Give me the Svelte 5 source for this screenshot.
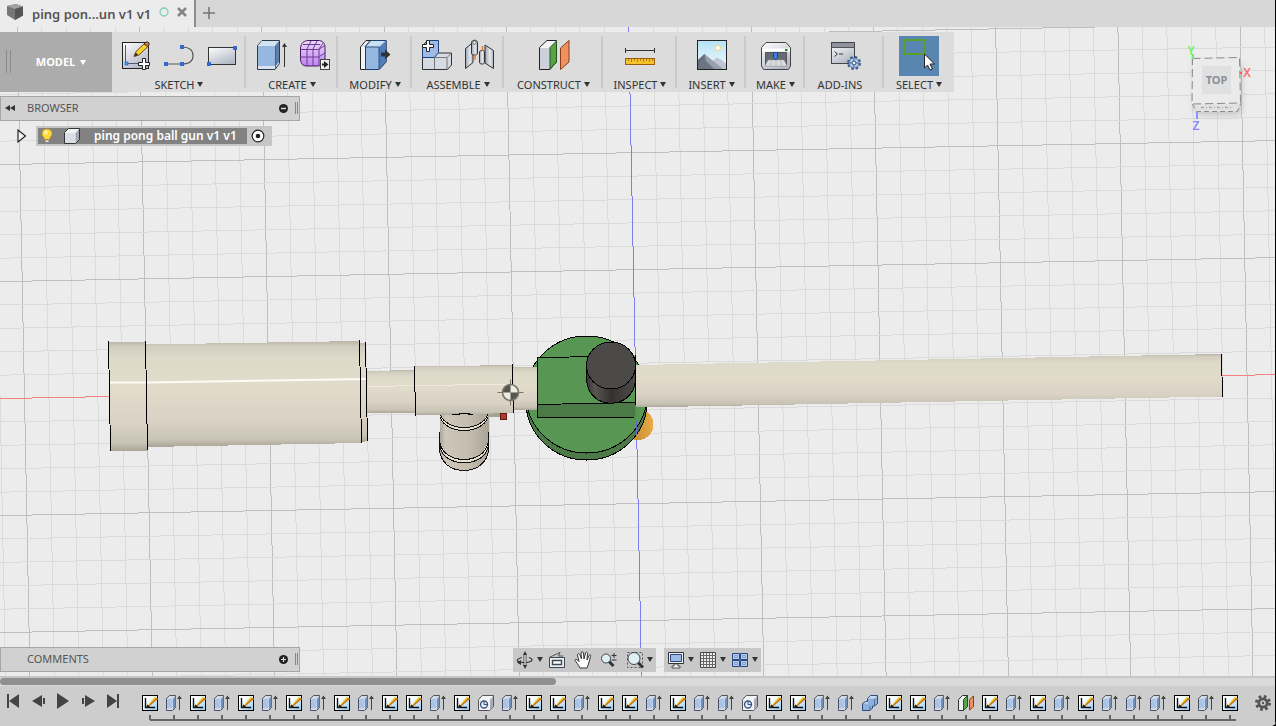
<script>
  const groups = [
    { label: 'SKETCH', icons: ['sketch', 'spline', 'rect'], menu: true },
    { label: 'CREATE', icons: ['box', 'form'], menu: true },
    { label: 'MODIFY', icons: ['presspull'], menu: true },
    { label: 'ASSEMBLE', icons: ['component', 'joint'], menu: true },
    { label: 'CONSTRUCT', icons: ['plane'], menu: true },
    { label: 'INSPECT', icons: ['measure'], menu: true },
    { label: 'INSERT', icons: ['decal'], menu: true },
    { label: 'MAKE', icons: ['print'], menu: true },
    { label: 'ADD-INS', icons: ['addins'], menu: false },
    { label: 'SELECT', icons: ['select'], menu: true }
  ];

  const playback = [
    { name: 'Go to beginning', d: 'M0 1h2v14H0zM12 1v14L2 8z' },
    { name: 'Step back', d: 'M10 2v12L0 8zM11 5h2v6h-2z' },
    { name: 'Play', d: 'M0 0v16l12-8z' },
    { name: 'Step forward', d: 'M0 5h2v6H0zM3 2v12l10-6z' },
    { name: 'Go to end', d: 'M0 1v14l10-7zM10 1h2v14h-2z' }
  ];

  const names = { S: 'Sketch', E: 'Extrude', H: 'Hole', C: 'Combine', P: 'Plane' };
  const steps = [...'SESESESESESSESHESSESSESEEHSSEECSSEPSESESEEESES'];

  const across = Array.from({ length: 58 }, (_, i) => i - 4);
  const down = Array.from({ length: 31 }, (_, i) => i - 17);
</script>

{#snippet caret(hidden = false)}
  <svg class="caret" class:hidden width="6" height="5" viewBox="0 0 6 5" aria-hidden="true"><path d="M0 0h6L3 5z" fill="currentColor" /></svg>
{/snippet}

{#snippet toolIcon(name)}
  <svg width="32" height="32" viewBox="0 0 32 32" aria-hidden="true">
    {#if name === 'sketch'}
      <rect x="2.5" y="3.5" width="26" height="26" fill="url(#paper)" stroke="#222" />
      <path d="M5.500 6v18.500H20" fill="none" stroke="#555b66" />
      <rect x="5" y="23" width="3" height="3" fill="#3c9cf0" stroke="#1b62b8" stroke-width=".6" />
      <path d="M14 17.500l2-5L25 4l3.500 3L19 16z" fill="#fbd12c" stroke="#6b4a12" />
      <path d="M24 5l2-2h2l1.500 2-2 2.500z" fill="#b98257" stroke="#4d2d12" />
      <path d="M14 17.500l2-4 2 2.500z" fill="#3a2a10" />
      <path d="M22.500 19.500h3v4h4v3h-4v4h-3v-4h-4v-3h4z" fill="#fff" stroke="#222" />
    {:else if name === 'spline'}
      <path d="M3 25h16c6 0 11-2 11-8.500C30 10 24 8 19 8" fill="none" stroke="#555" stroke-width="1.200" />
      <path d="M1 23h4v4H1zM17 23h4v4h-4zM17 6h4v4h-4z" fill="#3567cf" />
    {:else if name === 'rect'}
      <rect x="2.500" y="8.500" width="27" height="17" fill="url(#paper)" stroke="#333" />
      <path d="M1 23h4v4H1zM27 7h4v4h-4z" fill="#3567cf" />
    {:else if name === 'box'}
      <path d="M2.500 6.500L7 1.500h17.500v23L20 30.500H2.500z" fill="#dce3ec" stroke="#2c3a50" />
      <path d="M3 7h17v20H3z" fill="#96b7df" />
      <path d="M3 6.500L7 2h17l-4 4.500z" fill="#d2e4f3" />
      <path d="M20.500 7L24 3v20l-3.500 4z" fill="#5d7fae" />
      <path d="M20.500 6.500L24 2.500M20.500 7v23" stroke="#2c3a50" stroke-width=".7" fill="none" />
      <path d="M29.500 28V6" stroke="#333" />
      <path d="M27 8l2.500-4L32 8z" fill="#333" />
    {:else if name === 'form'}
      <path d="M2.500 9C3 4 6 1.500 11 1.500h9c5 0 7 3 7 7V18c0 6-3 9-8 9H9c-5 0-6.500-3-6.500-8z" fill="url(#purple)" stroke="#41185e" />
      <path d="M2.500 10.500h18l6.500-4M2.500 18h18l6.500-4M5 5.500h17M9 27V10l4-8M15 27V10l4-8M21 27V10l4-6" stroke="#6d3a92" fill="none" />
      <rect x="22.500" y="20.500" width="9" height="10" fill="#eee" stroke="#444" />
      <path d="M26 22l4.500 3.500L26 29zM24 24.500h3v2h-3z" fill="#222" />
    {:else if name === 'presspull'}
      <path d="M1.500 30.500V8L7 1.500h20V23l-7 7.500z" fill="#f3f4f6" stroke="#222" />
      <path d="M6.500 30.500V8L12 1.500h15V23l-7 7.500z" fill="#96b7df" stroke="#1f3f74" />
      <path d="M7 7.500L12 2h14l-6 5.500z" fill="#c9e0f2" />
      <path d="M20 8.500l6.500-6V23L20 29.500z" fill="#4f7fba" />
      <path d="M6.500 8H20v22M10.500 2l-5 6" stroke="#1f3f74" fill="none" stroke-width=".8" />
      <path d="M22 13.500h4v-3l5.500 5-5.500 5v-3h-4z" fill="#333" />
    {:else if name === 'component'}
      <path d="M1.500 30.500v-12h12v-3l4-1.500h13v12l-4 4.500z" fill="#d6dae2" stroke="#333" />
      <path d="M1.500 18.500v-12l5-5h11v12l-4 5z" fill="#9dbbe6" stroke="#1f3f74" />
      <path d="M13.500 30V18.500H26v12M26 18.500l4-4" stroke="#777" fill="none" />
      <path d="M5.500 1.500h3v4h4v3h-4v4h-3v-4h-4v-3h4z" fill="#fff" stroke="#222" />
    {:else if name === 'joint'}
      <path d="M1.500 29.500V9.500L9 3.500v20z" fill="url(#steel)" stroke="#333" />
      <path d="M7.500 3.500c0-3 6-3 6 0v11c0 2-6 2-6 0z" fill="url(#steel)" stroke="#333" />
      <circle cx="10.500" cy="3.500" r="1.600" fill="#fff" stroke="#333" stroke-width=".7" />
      <path d="M29.500 29.500v-18L21 6v18z" fill="url(#steel)" stroke="#333" />
      <path d="M15.500 13c0-2 5-2 5 0v10.500c0 2-5 2-5 0z" fill="url(#steel)" stroke="#333" />
      <path d="M11 16v4.500M18.500 7v5" stroke="#e87722" stroke-width="1.400" />
    {:else if name === 'plane'}
      <path d="M1.500 8.500L9 1.500h9.500V23L12 30.500H1.500z" fill="#f4f5f7" stroke="#222" />
      <path d="M2 9h10v21H2z" fill="#cdd1d9" />
      <path d="M12 8.500L18.500 2v21L12 30z" fill="#57a446" stroke="#24541c" />
      <path d="M22.500 30.500V9L31 1.500V23z" fill="#ee9160" stroke="#8c3b12" />
    {:else if name === 'measure'}
      <path d="M1.500 9v5M30.500 9v5M1 11.500h29" stroke="#333" fill="none" />
      <rect x="1.500" y="19.500" width="29" height="6" fill="#f6c22e" stroke="#9b5b0a" />
      <path d="M4.500 20v2M7.500 20v3M10.500 20v2M13.500 20v3M16.500 20v2M19.500 20v3M22.500 20v2M25.500 20v3M28.500 20v2" stroke="#b07a18" />
    {:else if name === 'decal'}
      <rect x="1.500" y="1.500" width="29" height="29" fill="url(#sky)" stroke="#222" />
      <circle cx="22" cy="9" r="2.500" fill="#fff" stroke="#ffd45c" />
      <path d="M2 21l6.500-6 4 4 3 8v3H2z" fill="#7d8492" />
      <path d="M16 22l5-3.500 4 2 5 4V30H16z" fill="#c0c6d1" />
      <path d="M8.500 15L27 30H2v-1z" fill="#979eac" />
      <path d="M8.500 15L10 22 18 30H2v-9z" fill="#5f6674" opacity=".75" />
    {:else if name === 'print'}
      <path d="M1.500 8.500L6 3.500h20l4.500 5V27l-2 3.500h-25L1.500 27z" fill="url(#paper)" stroke="#444" />
      <path d="M2 9.500h28v3H2z" fill="#fff" />
      <path d="M5.500 13.500h21V26h-21z" fill="#656b75" stroke="#555" />
      <path d="M8 21h16l3 6H5z" fill="#eef0f3" stroke="#888" stroke-width=".6" />
      <path d="M8 23h16M7 25h18M12 21l-2 6M16 21v6M20 21l2 6" stroke="#aaa" stroke-width=".6" />
      <path d="M13.500 13.500h4v5l-2 2.500-2-2.500z" fill="#3f80dc" stroke="#1b4796" />
      <path d="M25 10h2.500v2H25z" fill="#118a11" />
    {:else if name === 'addins'}
      <rect x="2.500" y="3.500" width="23" height="21" fill="url(#paper)" stroke="#444" />
      <path d="M3 4h22v4H3z" fill="#8e939c" />
      <path d="M2.500 8.500h23" stroke="#555" />
      <path d="M5.500 12.500l3 2.500-3 2.500M10 15h4" stroke="#333" fill="none" />
      <g transform="translate(25 24)">
        <circle r="5.500" fill="none" stroke="#3c5f8f" stroke-dasharray="2.400 1.920" stroke-width="3" />
        <circle r="5" fill="#b4cdeb" stroke="#3c5f8f" stroke-width=".8" />
        <circle r="2" fill="#eef4fb" stroke="#2d4b78" />
        <path d="M0-4v1.500M0 4V2.500M-4 0h1.500M4 0H2.500" stroke="#2d4b78" />
      </g>
    {:else if name === 'select'}
      <rect x="1" y="1" width="21" height="14" fill="none" stroke="#5aa50c" stroke-width="1.600" />
      <path d="M21.500 15v14l3-3 2.500 5 2.500-1-2.500-5h4.500z" fill="#fff" stroke="#222" />
    {/if}
  </svg>
{/snippet}

{#snippet stepIcon(kind)}
  <svg width="16" height="16" viewBox="0 0 16 16" aria-hidden="true">
    {#if kind === 'S'}
      <rect x=".5" y=".5" width="15" height="15" fill="url(#page)" stroke="#000" />
      <path d="M3.500 3v9.500H13" fill="none" stroke="#111" stroke-width="1.400" />
      <path d="M5 11.500L13 1.500 16 4l-9 7.500z" fill="#f9c81f" />
      <path d="M7 11.500l8.500-7.500-1.200-1L6 11z" fill="#b56a2c" />
      <path d="M4 13l1.200-3.500L8 11.500z" fill="#222" />
    {:else if kind === 'E'}
      <path d="M.5 3.500l3-3h6v12l-3 3h-6z" fill="#d3dae4" stroke="#4a5464" />
      <path d="M1 4h5.500v9H1z" fill="#a9c6ea" />
      <path d="M7 4l2.500-3v11L7 14z" fill="#6f8fb8" />
      <path d="M13.500 15V2" stroke="#444" />
      <path d="M11 4l2.500-3.500L16 4z" fill="#444" />
    {:else if kind === 'H'}
      <path d="M.5 4.500l4-4h11v11l-4 4H.5z" fill="#f1f2f4" stroke="#555" />
      <path d="M12 5l3-4v10.500L12 15z" fill="#a8acb4" />
      <circle cx="6" cy="9.500" r="3.500" fill="#e4edf8" stroke="#33507e" stroke-width="1.300" />
      <path d="M6 6v3.500h3.500" fill="none" stroke="#33507e" />
    {:else if kind === 'C'}
      <path d="M.5 8.500l3-2h2v-3l3-3h7v8l-3 2.500h-2v2l-2.500 2.500H.5z" fill="#8fb0dc" stroke="#2c4a7c" />
      <path d="M6 3.500l2.500-2.500H15l-2.500 2.500zM1 8.500L4 7h2v1.500z" fill="#c8dcf2" />
      <path d="M12.500 4v6.500M8 11v4" stroke="#4f719f" />
    {:else}
      <path d="M.5 4.500l4-4h5v11l-4 4h-5z" fill="#eff0f2" stroke="#333" />
      <path d="M5.500 4.500l4-4v11l-4 4z" fill="#57a446" stroke="#24541c" />
      <path d="M11.500 15V4.500l4-3.500v10.500z" fill="#ee9160" stroke="#8c3b12" />
    {/if}
  </svg>
{/snippet}

<div class="app">
  <svg class="defs" aria-hidden="true">
    <defs>
      <linearGradient id="paper" x1="0" y1="0" x2=".6" y2="1"><stop offset="0" stop-color="#fff" /><stop offset="1" stop-color="#b4b9c8" /></linearGradient>
      <linearGradient id="page" x1="0" y1="0" x2="1" y2="1"><stop offset=".3" stop-color="#fff" /><stop offset="1" stop-color="#8fc4f0" /></linearGradient>
      <linearGradient id="purple" x1="0" y1="0" x2="0" y2="1"><stop offset="0" stop-color="#eedcfb" /><stop offset="1" stop-color="#be82f2" /></linearGradient>
      <linearGradient id="steel"><stop offset="0" stop-color="#9da4b0" /><stop offset=".6" stop-color="#e6e9ee" /><stop offset="1" stop-color="#a9afba" /></linearGradient>
      <linearGradient id="sky" x1="0" y1="0" x2="0" y2="1"><stop offset="0" stop-color="#b4e2f6" /><stop offset="1" stop-color="#f3fbff" /></linearGradient>
      <linearGradient id="tube" x1="0" y1="0" x2="0" y2="1">
        <stop offset="0" stop-color="#b9b5a6" /><stop offset=".05" stop-color="#d2cdbe" /><stop offset=".16" stop-color="#dddaca" /><stop offset=".45" stop-color="#e2dbcb" /><stop offset=".75" stop-color="#d9d2c5" /><stop offset=".93" stop-color="#c8c3b5" /><stop offset="1" stop-color="#a9a496" />
      </linearGradient>
      <linearGradient id="grip"><stop offset="0" stop-color="#a8a297" /><stop offset=".12" stop-color="#cdc6b9" /><stop offset=".6" stop-color="#c5bdaf" /><stop offset="1" stop-color="#a9a397" /></linearGradient>
      <linearGradient id="hopper"><stop offset="0" stop-color="#363433" /><stop offset=".18" stop-color="#5a5552" /><stop offset=".5" stop-color="#343231" /><stop offset="1" stop-color="#4f4b49" /></linearGradient>
      <linearGradient id="ball"><stop offset="0" stop-color="#b17c26" /><stop offset="1" stop-color="#e9ac48" /></linearGradient>
    </defs>
  </svg>

  <header class="tabs">
    <div class="tab">
      <svg width="18" height="18" viewBox="0 0 18 18" aria-hidden="true">
        <path d="M1 3l9-2 7 2.500v9L9 17 1 12z" fill="#777" /><path d="M1 3l9-2 7 2.500L9 6z" fill="#a2a2a2" /><path d="M9 6l8-2.500v9L9 17z" fill="#555" />
      </svg>
      <span class="doc">ping pon...un v1 v1</span>
      <svg width="10" height="10" viewBox="0 0 10 10" aria-hidden="true"><circle cx="5" cy="5" r="4" fill="none" stroke="#7fcdb8" stroke-width="1.300" /></svg>
      <button aria-label="Close tab"><svg width="10" height="10" viewBox="0 0 10 10"><path d="M1 1l8 8M9 1L1 9" stroke="#858585" stroke-width="2.600" /></svg></button>
    </div>
    <button class="new" aria-label="New tab"><svg width="12" height="12" viewBox="0 0 12 12"><path d="M6 0v12M0 6h12" stroke="#777" stroke-width="1.600" /></svg></button>
  </header>

  <main class="view">
    <svg class="scene" viewBox="0 27 1276 649" preserveAspectRatio="xMidYMid slice" shape-rendering="crispEdges" role="img" aria-label="ping pong ball gun model">
      <g class="grid">
        {#each across as i}
          <line class:major={i % 5 === 0} x1={17.2 + i * 24.46} y1="27" x2={30 + i * 24.46} y2="676" />
        {/each}
        {#each down as i}
          <line class:major={i % 5 === 0} x1="0" y1={398.6 + i * 23.4} x2="1276" y2={374.6 + i * 23.4} />
        {/each}
      </g>
      <line x1="0" y1="398.600" x2="1276" y2="374.600" stroke="#f58080" />
      <line x1="628.700" y1="27" x2="641.500" y2="676" stroke="#7d7df0" />

      <circle cx="638" cy="424.500" r="15.500" fill="url(#ball)" />
      <g stroke="#000">
        <ellipse cx="586.500" cy="401.500" rx="60.500" ry="58.500" fill="#4c7a47" />
        <ellipse cx="586.500" cy="394.500" rx="60.500" ry="58.500" fill="#589654" />
      </g>
      <path d="M635 365l587-11v42.500L635 407.500z" fill="url(#tube)" />
      <path d="M1221.500 354l1 43" stroke="#000" />

      <path d="M439.500 414h49v34c0 30-49 30-49 0z" fill="url(#grip)" />
      <g fill="none" stroke="#111">
        <path d="M441 416c6 17 40 17 46 0M441 445.500c5 21 41 21 46 0" stroke="#e8e1d3" stroke-width="2" />
        <path d="M439.500 432v16c0 30 49 30 49 0v-16" />
        <path d="M440 443c4 22 44 22 48 0M440 447c4 21 44 21 48 0M440 414c6 18 42 18 48 0M440 417c6 18 42 18 48 0" />
      </g>
      <path d="M488 413h13v4h-13z" fill="#a8a294" />
      <path d="M500.500 413.500h6v6h-6z" fill="#b53a2e" stroke="#5c1811" />

      <path d="M366 371l49-1v42.500l-49 .5z" fill="url(#tube)" />
      <path d="M513 367.500l25-1v43l-25 .5z" fill="url(#tube)" />
      <path d="M414.500 366.500l98-1.500 1 48-98 2.500z" fill="url(#tube)" />
      <path d="M452 414.500h8M459 413.500h11M468 414.500h5" stroke="#000" />
      <path d="M367 386.500l146-2.500" stroke="#efeadd" />
      <path d="M414.500 366l1 50M512.500 364l1 49" stroke="#000" />

      <path d="M145.500 344.500l214-3.500 2 102-214 4z" fill="url(#tube)" />
      <path d="M108.500 341.500h37l2 109-37 .5z" fill="url(#tube)" />
      <path d="M359.500 342.500h6l2 98.500-6 1z" fill="url(#tube)" />
      <path d="M109 382.500h37l221-3.500" stroke="#fdfbf6" stroke-width="2" fill="none" shape-rendering="auto" />
      <path d="M108.500 341l2 110.500M145.500 341l2 109.500M359.500 340l2 103M365.500 342l2 99" stroke="#000" />

      <g stroke="#000">
        <path d="M537.500 357.500l98-1.500v61l-98 1z" fill="#589654" />
        <path d="M537.500 404.500l98-2v14.500l-98 1z" fill="#4c7a47" />
      </g>
      <path d="M635.500 405l1 30" stroke="#6767cf" />
      <path d="M586.500 366v14c2 31 47 31 49 0v-14z" fill="url(#hopper)" stroke="#000" />
      <ellipse cx="611" cy="365.500" rx="24.500" ry="23.500" fill="#4b4a49" stroke="#000" />

      <g transform="translate(510.500 392.500)" shape-rendering="auto">
        <circle r="8" fill="#eeebe2" />
        <path d="M0 0h8a8 8 0 0 1-8 8zM0 0h-8a8 8 0 0 1 8-8z" fill="#57544e" />
        <circle r="8" fill="none" stroke="#77746b" stroke-width="1.600" />
        <path d="M0-13v5M0 13V8M-13 0h5M13 0H8" stroke="#77746b" />
      </g>
    </svg>

    <svg class="cube" width="70" height="92" viewBox="1184 43 70 92" role="img" aria-label="View cube">
      <defs><filter id="shade" x="-30%" y="-30%" width="160%" height="160%"><feGaussianBlur stdDeviation="3" /></filter></defs>
      <path d="M1194 64h48v46l-4 5h-39l-5-6z" fill="#999" opacity=".45" filter="url(#shade)" />
      <path d="M1192.500 58l47-1 1.500 46-4 8.500-41 .5-3.500-8z" fill="#e2e2e2" />
      <path d="M1192.500 58.500l47-1 1 45.500-48.500 1z" fill="#ebebeb" />
      <path d="M1202 66h29v28h-29z" fill="#dfe0e2" />
      <g fill="none" stroke="#8b8b8b">
        <path d="M1192.500 58.500l47-1 1 45.500-48.500 1z" stroke-dasharray="8 4" />
        <path d="M1192.500 104l4 7.500h41l3.500-8.500" stroke-dasharray="5 3" />
      </g>
      <text x="1216.500" y="83.500" text-anchor="middle" class="face">TOP</text>
      <path d="M1201 107.500h32" stroke="#aaa" stroke-width="1.500" stroke-dasharray="3 2 1 2" />
      <path d="M1193 54v5" stroke="#6bf36b" stroke-width="2" /><path d="M1197 112v7" stroke="#8f8fff" stroke-width="2" /><path d="M1240 73h2" stroke="#f55" stroke-width="2" />
      <text x="1191" y="55" text-anchor="middle" class="axis" fill="#6bf36b">Y</text>
      <text x="1247" y="77" text-anchor="middle" class="axis" fill="#f97070">X</text>
      <text x="1196" y="129.500" text-anchor="middle" class="axis" fill="#8585ff">Z</text>
    </svg>

    <nav class="toolbar" aria-label="Tools">
      <button class="model"><span class="bars"></span>MODEL {@render caret()}</button>
      {#each groups as g}
        <section class="group">
          <div class="icons">
            {#each g.icons as name}
              <button class="tool" class:active={name === 'select'} aria-label={name}>{@render toolIcon(name)}</button>
            {/each}
          </div>
          <button class="label">{g.label}{@render caret(!g.menu)}</button>
        </section>
      {/each}
    </nav>

    <aside class="browser">
      <div class="panel">
        <button aria-label="Collapse"><svg width="10" height="8" viewBox="0 0 10 8"><path d="M5 1v6L0 4zM10 1v6L5 4z" fill="#333" /></svg></button>
        <span class="title">BROWSER</span>
        <button aria-label="Hide"><svg width="9" height="9" viewBox="0 0 9 9"><circle cx="4.500" cy="4.500" r="4.500" fill="#222" /><path d="M2 4.500h5" stroke="#ddd" stroke-width="1.500" /></svg></button>
        <span class="grab"></span>
      </div>
      <div class="tree">
        <button aria-label="Expand"><svg width="10" height="14" viewBox="0 0 10 14"><path d="M1 1v12l7.500-6z" fill="#f5f5f5" stroke="#222" stroke-width="1.200" /></svg></button>
        <div class="row">
          <div class="node">
            <svg width="12" height="16" viewBox="0 0 12 16" aria-hidden="true"><path d="M6 1C3 1 1 3 1 5.500S3.500 9 3.500 11.500h5C8.500 9 11 8 11 5.500S9 1 6 1z" fill="#ffd93b" stroke="#c99512" stroke-width=".6" /><circle cx="5" cy="4.500" r="2" fill="#fff3a8" /><path d="M4 12h4v2.500H4z" fill="#e8e8e8" stroke="#555" stroke-width=".5" /></svg>
            <svg width="16" height="16" viewBox="0 0 16 16" aria-hidden="true"><path d="M.5 4.500l4-4h11v11l-4 4H.5z" fill="#f1f2f4" stroke="#333" /><path d="M1 5h10v10H1z" fill="#dcdee6" /><path d="M11.500 5l3.500-4v10.500L11.500 15z" fill="#a3a6ae" /></svg>
            <span>ping pong ball gun v1 v1</span>
          </div>
          <button aria-label="Activate component"><svg width="14" height="14" viewBox="0 0 14 14"><circle cx="7" cy="7" r="5.800" fill="#fff" stroke="#222" stroke-width="1.200" /><circle cx="7" cy="7" r="2.300" fill="#222" /></svg></button>
        </div>
      </div>
    </aside>

    <div class="bottom">
      <div class="panel">
        <span class="title only">COMMENTS</span>
        <button aria-label="Add comment"><svg width="9" height="9" viewBox="0 0 9 9"><circle cx="4.500" cy="4.500" r="4.500" fill="#222" /><path d="M2 4.500h5M4.500 2v5" stroke="#ddd" stroke-width="1.200" /></svg></button>
        <span class="grab"></span>
      </div>
      <div class="navs">
        <div class="nav">
          <button aria-label="Orbit"><svg width="18" height="18" viewBox="0 0 18 18"><path d="M13 6.500c3 1 4 2.500 2 3.800-3 1.800-10 1.700-13 0C0 9 3 7 6 6.500" fill="none" stroke="#333" stroke-width="1.200" /><path d="M8 3v12h2V3z" fill="#fff" stroke="#333" stroke-width=".8" /><path d="M7 4l2-4 2 4zM7 14l2 4 2-4zM1 11.500l4-2.500v5z" fill="#333" /></svg></button>
          {@render caret()}
          <button aria-label="Look at"><svg width="18" height="18" viewBox="0 0 18 18"><path d="M1.500 6.500h15v10h-15z" fill="#eee" stroke="#3d4856" /><path d="M4.500 9.500h9v4h-9z" fill="#fff" stroke="#3d4856" stroke-width="1.400" /><path d="M2 6l10-4.500L10.500 5H15" stroke="#555" fill="none" /></svg></button>
          <button aria-label="Pan"><svg width="18" height="18" viewBox="0 0 18 18"><path d="M6 17C4 13 2 11 1 9.500c0-1.500 2-1.500 4 1L3.500 4c0-1.500 1.500-2 2.500 0l1.500 4-.5-6c0-1.500 2-1.500 2.500 0l.5 6L11.500 2c.5-1.500 2-1 2 .5L13 9l2-4.500c1-1.500 2-.5 1.500 1L14.500 13 13 17z" fill="#fff" stroke="#333" /></svg></button>
          <button aria-label="Zoom"><svg width="18" height="18" viewBox="0 0 18 18"><path d="M8.500 10l5 5" stroke="#333" stroke-width="3" /><circle cx="6" cy="7.500" r="4.500" fill="#dff0f0" stroke="#445" /><path d="M11.500 4.500h5M14 2v5M11.500 9h5" stroke="#333" /></svg></button>
          <button aria-label="Fit"><svg width="18" height="18" viewBox="0 0 18 18"><path d="M1.500 1.500h15v15h-15z" fill="none" stroke="#555" stroke-dasharray="2 2" /><path d="M12 11.500l5 5" stroke="#333" stroke-width="3" /><circle cx="8" cy="7.500" r="6" fill="#dff0f0" stroke="#445" /></svg></button>
          {@render caret()}
        </div>
        <div class="nav">
          <button aria-label="Display settings"><svg width="18" height="18" viewBox="0 0 18 18"><path d="M1.500 1.500h15v11h-15z" fill="#f2f2f2" stroke="#333" /><path d="M3.500 3.500h11v7h-11z" fill="#9cbce6" stroke="#27477c" /><path d="M7 13h4v2h2v2H5v-2h2z" fill="#eee" stroke="#333" stroke-width=".8" /></svg></button>
          {@render caret()}
          <button aria-label="Grid and snaps"><svg width="18" height="18" viewBox="0 0 18 18"><path d="M1.500 1.500h15v15h-15z" fill="#eee" stroke="#444" /><path d="M4.500 2v15M7.500 2v15M10.500 2v15M13.500 2v15M2 4.500h15M2 7.500h15M2 10.500h15M2 13.500h15" stroke="#666" /></svg></button>
          {@render caret()}
          <button aria-label="Viewports"><svg width="18" height="18" viewBox="0 0 18 18"><path d="M1.500 2.500h7v6h-7zM9.500 2.500h7v6h-7zM1.500 9.500h7v6h-7zM9.500 9.500h7v6h-7z" fill="#b4cdee" stroke="#27477c" /><path d="M3.500 4.500h3v2h-3zM11.500 4.500h3v2h-3zM3.500 11.500h3v2h-3zM11.500 11.500h3v2h-3z" fill="none" stroke="#7c9fce" /></svg></button>
          {@render caret()}
        </div>
      </div>
    </div>
  </main>

  <footer>
    <div class="scroll"><div class="thumb"></div></div>
    <div class="timeline">
      <div class="play">
        {#each playback as p}
          <button aria-label={p.name}><svg width="13" height="16" viewBox="0 0 13 16"><path d={p.d} fill="#444" /></svg></button>
        {/each}
      </div>
      <ol>
        {#each steps as s}
          <li><button aria-label={names[s]}>{@render stepIcon(s)}</button></li>
        {/each}
      </ol>
      <button class="gear" aria-label="Timeline settings">
        <svg width="16" height="16" viewBox="0 0 16 16"><circle cx="8" cy="8" r="6.500" fill="none" stroke="#555" stroke-width="3" stroke-dasharray="2.600 2.505" /><circle cx="8" cy="8" r="4.200" fill="none" stroke="#555" stroke-width="2.800" /><circle cx="8" cy="8" r="1.200" fill="#555" /></svg>
      </button>
    </div>
  </footer>
</div>

<style>
  :global(body) { margin: 0; background: #000; }
  .app {
    position: relative; display: flex; flex-direction: column; min-height: 100vh;
    overflow: hidden; border-bottom-right-radius: 5px; background: #ececec; color: #333;
    font: 11px/14px "Noto Sans", sans-serif;
  }
  .app::after { content: ''; position: absolute; inset: 0 0 0 auto; width: 1px; background: #000; }
  .defs { position: absolute; width: 0; height: 0; }
  button { display: flex; align-items: center; justify-content: center; padding: 0; border: 0; background: none; color: inherit; font: inherit; }
  svg { display: block; flex: none; }
  .hidden { visibility: hidden; }

  .tabs { display: flex; height: 27px; background: #d7d7d7; }
  .tab { display: flex; align-items: center; gap: 8px; box-sizing: border-box; width: 196px; padding: 0 7px 3px 6px; border-right: 2px solid #8c8c8c; background: #ececec; }
  .doc { flex: 1; padding-top: 3px; font-size: 13px; font-weight: 600; color: #555; white-space: nowrap; }
  .new { padding: 0 7px 2px; }

  .view { position: relative; flex: 1; display: flex; flex-direction: column; overflow: hidden; padding: 5px 0 4px; }
  .scene { position: absolute; inset: 0; width: 100%; height: 100%; background: #ececec; }
  .grid line { stroke: #dbdbdb; }
  .grid line.major { stroke: #bfbfbf; }
  .cube { position: absolute; top: 16px; right: 22px; }
  .face { font: 700 11px "Noto Sans", sans-serif; fill: #8d9096; }
  .axis { font: 600 12px "Noto Sans", sans-serif; }

  .toolbar { position: relative; display: grid; grid-template-columns: 112px 134px 92px 74px 92px 99px 74px 69px 59px 79px 70px; align-self: flex-start; height: 60px; background: #dcdcdc; }
  .model { position: relative; gap: 5px; background: #acacac; color: #fff; font-weight: 700; padding-left: 10px; }
  .bars { position: absolute; left: 6px; top: 18px; width: 3px; height: 23px; border: solid #8b8b8b; border-width: 0 1px; }
  .group { display: flex; flex-direction: column; align-items: center; padding-top: 4px; background: linear-gradient(#c9c9c9, #c9c9c9) right 4px / 2px 52px no-repeat; }
  .group:last-child { background: none; }
  .icons { display: flex; gap: 11px; height: 40px; align-items: center; }
  .tool { height: 38px; align-items: flex-start; padding-top: 2px; box-sizing: border-box; }
  .group .active { width: 40px; height: 40px; padding-top: 3px; background: #5886b1; }
  .label { gap: 3px; padding-top: 2px; }
  .label .caret { margin-top: -2px; }

  .browser { position: relative; align-self: flex-start; padding-top: 4px; }
  .panel { display: flex; align-items: center; box-sizing: border-box; width: 300px; height: 25px; padding: 0 1px 1px 4px; border: 1px solid #a6a6a6; background: #d1d1d1; color: #555; }
  .title { flex: 1; padding-left: 12px; }
  .title.only { padding-left: 22px; }
  .grab { width: 1px; height: 12px; margin-left: 7px; border: solid #888; border-width: 0 1px; }
  .tree { display: flex; align-items: center; gap: 9px; padding: 5px 0 0 17px; }
  .row { display: flex; align-items: center; height: 20px; padding: 0 7px 0 2px; gap: 4px; background: #c6c6c6; }
  .node { display: flex; align-items: center; height: 16px; padding: 0 10px 0 3px; background: #828282; color: #fff; font-size: 12px; font-weight: 600; }
  .node svg + svg { margin: 0 14px 0 11px; }

  .bottom { position: relative; display: grid; grid-template-columns: 1fr auto 1fr; align-items: center; margin-top: auto; padding-right: 3px; }
  .navs { display: flex; gap: 8px; }
  .nav { display: flex; align-items: center; gap: 8px; height: 24px; padding: 0 6px 0 3px; background: #c8c8c8; }
  .nav .caret { margin-left: -5px; margin-right: -3px; }

  footer { border-top: 2px solid #c6c6c6; background: #cdcdcd; }
  .scroll { height: 8px; background: #dadada; }
  .thumb { width: 43.6%; height: 7px; border-radius: 4px; background: #8f8f8f; }
  .timeline { display: flex; height: 40px; }
  .play { display: flex; gap: 12px; align-items: flex-start; padding: 7px 18px 0 7px; }
  ol { position: relative; display: flex; flex: none; margin: 0; padding: 0; list-style: none; }
  ol::after { content: ''; position: absolute; left: 12px; right: 6px; top: 33px; height: 2px; background: #666; }
  li { width: 24px; padding-top: 9px; }
  li button { width: 24px; height: 16px; }
  li::after { content: ''; display: block; width: 2px; height: 5px; margin: 4px 11px 0; background: #666; }
  .gear { align-self: flex-start; margin: 9px 5px 0 auto; }
</style>
